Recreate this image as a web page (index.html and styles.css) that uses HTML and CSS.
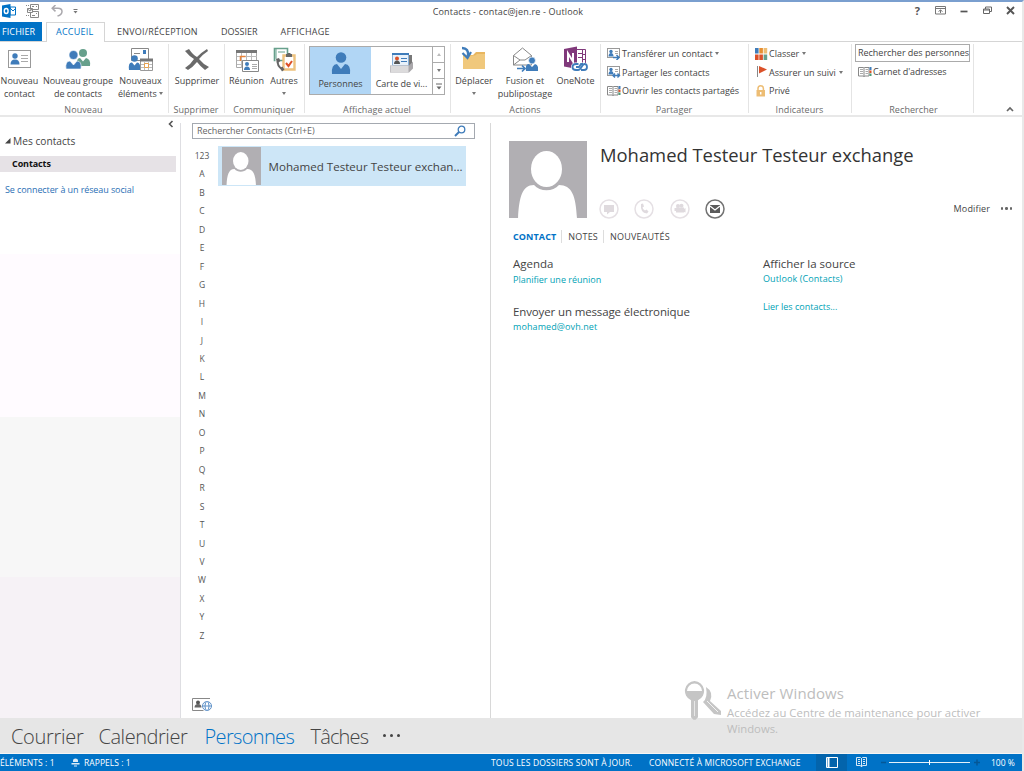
FILE: index.html
```html
<!DOCTYPE html>
<html lang="fr">
<head>
<meta charset="utf-8">
<title>Contacts - contac@jen.re - Outlook</title>
<link rel="stylesheet" href="styles.css">
</head>
<body>
<svg width="0" height="0" class="defs">
  <symbol id="avatar" viewBox="0 0 78 78"><rect width="78" height="78" fill="#b1afb3"/><path d="M9 78C10 57 13 44 25 44C31 51 44 51 50 44C63 44 67 55 68 78Z" fill="#fff"/><ellipse cx="37.500" cy="28" rx="15.500" ry="18" fill="#fff"/></symbol>
  <symbol id="person" viewBox="0 0 20 22"><circle cx="10" cy="5.500" r="5.300" fill="#3f7cba"/><path d="M1 22Q0 12.500 6 12L10 17L14 12Q20 12.500 19 22Z" fill="#3f7cba"/></symbol>
  <symbol id="card" viewBox="0 0 14 12"><rect x=".5" y=".5" width="12" height="9" fill="#fff" stroke="#999"/><circle cx="4" cy="3.500" r="1.700" fill="#3f7cba"/><path d="M1.500 8.500q0-3.500 2.500-3.500t2.500 3.500z" fill="#3f7cba"/><path d="M8 3.500h3M8 5.500h3" stroke="#aaa"/></symbol>
  <symbol id="book" viewBox="0 0 14 12"><path d="M.5 1.500h5l.5.5.5-.5h4.500v8.500h-4.500l-.5.500-.5-.5h-5zM6 2v9" fill="#fff" stroke="#888"/><path d="M2 3.500h3M2 5.500h3M2 7.500h3M7.500 3.500h2.500M7.500 5.500h2.500M7.500 7.500h2.500" stroke="#aaa"/><path d="M11.500 1h2v3h-2z" fill="#3f7cba"/><path d="M11.500 4.500h2v2.500h-2z" fill="#db5129"/><path d="M11.500 7.500h2v2.500h-2z" fill="#4b9d78"/></symbol>
</svg>
<div class="window">
  <header class="titlebar">
    <div class="quick">
      <svg width="14" height="14" viewBox="0 0 14 14"><path d="M8 3h5.500v8H8z" fill="#fff" stroke="#0072c6"/><path d="M8 4l3 3 3-3" fill="none" stroke="#0072c6"/><path d="M0 1.500L8.500 0v14L0 12.500z" fill="#0072c6"/><ellipse cx="4.200" cy="7" rx="1.900" ry="2.500" fill="none" stroke="#fff" stroke-width="1.400"/></svg>
      <svg width="14" height="14" viewBox="0 0 14 14" fill="#fff" stroke="#888"><path d="M4.500.5h8v5h-8zM10 2.500h1M6 2.500h2"/><path d="M4.500 7.500h8v6h-8zM10 9.500h1M6 11.500h3"/><path d="M1.500 4.500h5v4h-5zM1.500 5l2.500 2 2.500-2"/><path d="M0 1.500h4M0 11.500h4" stroke-dasharray="1 1"/></svg>
      <svg width="12" height="12" viewBox="0 0 12 12" fill="none" stroke="#aaa8ad" stroke-width="1.500"><path d="M4.500 0L1.200 3.200l3.300 3.200M1.500 3.200H7q4 0 4 3.300T6.500 11"/></svg>
      <svg class="more" width="5" height="6" viewBox="0 0 5 6"><path d="M.5 1.500h4" stroke="#777"/><path d="M.5 3h4L2.500 5.500z" fill="#777"/></svg>
    </div>
    <div class="title">Contacts - contac@jen.re - Outlook</div>
    <div class="controls">
      <b>?</b>
      <svg width="11" height="9" viewBox="0 0 11 9" fill="none" stroke="#777"><path d="M.5.500h10v7.500H.5zM1 2.500h9M5.500 7V4M3.500 5.500l2-1.500 2 1.500"/></svg>
      <svg width="8" height="9" viewBox="0 0 8 9"><path d="M.5 5.500h7" stroke="#555" stroke-width="1.700"/></svg>
      <svg width="9" height="9" viewBox="0 0 9 9" fill="#fff" stroke="#666"><path d="M2.500 1h6v4.500h-6z"/><path d="M.5 3h6v4.500h-6zM.5 4h6"/></svg>
      <svg width="9" height="9" viewBox="0 0 9 9"><path d="M1 1l7 7M8 1L1 8" stroke="#555" stroke-width="1.900"/></svg>
    </div>
  </header>
  <nav class="tabs">
    <a class="file">FICHIER</a><a class="active">ACCUEIL</a><a class="t3">ENVOI/RÉCEPTION</a><a class="t4">DOSSIER</a><a class="t5">AFFICHAGE</a>
  </nav>
  <section class="ribbon">
    <div class="group">
      <div class="tools">
        <div class="btn w39"><svg width="24" height="28" viewBox="0 0 24 28"><rect x=".5" y="4.500" width="22" height="17" fill="#fff" stroke="#999"/><circle cx="7" cy="10" r="2.700" fill="#3f7cba"/><path d="M2.500 18.500q0-5 4.500-5t4.500 5z" fill="#3f7cba"/><path d="M13 9.500h7M13 12.500h7M13 15.500h7" stroke="#aaa"/></svg><span>Nouveau<br>contact</span></div>
        <div class="btn w78"><svg width="26" height="28" viewBox="0 0 26 28"><circle cx="18" cy="7" r="4" fill="#67a08c"/><path d="M12 20q-1-8 3-8l3 3.500L21 12q5 1 4 8z" fill="#67a08c"/><circle cx="8.500" cy="9" r="4.500" fill="#3f7cba" stroke="#fff" stroke-width=".6"/><path d="M1 23q-1-8 4-8l3.500 4L12 15q5 0 4 8z" fill="#3f7cba" stroke="#fff" stroke-width=".6"/></svg><span>Nouveau groupe<br>de contacts</span></div>
        <div class="btn w47"><svg width="26" height="28" viewBox="0 0 26 28"><path d="M3.500 2.500h17v12h-17z" fill="#fff" stroke="#888"/><path d="M15 4h3v4h-3z" fill="#3f7cba"/><path d="M6 7.500h6" stroke="#888"/><circle cx="6.500" cy="12.500" r="3.300" fill="#3f7cba"/><path d="M1 24q-1-8 3-7.500l2.500 3L9 16.500q4 0 3 7.500z" fill="#3f7cba"/><path d="M12.500 13.500h12v11h-12z" fill="#fff" stroke="#999"/><path d="M12 14h13" stroke="#777" stroke-width="3"/><path d="M13 18.500h11M13 21.500h11M16.500 16v8M20.500 16v8" stroke="#bbb"/><path d="M16.500 17.500h4v4h-4z" fill="#fff" stroke="#e8a04b"/></svg><span>Nouveaux<br>éléments <i class="dd"></i></span></div>
      </div><div class="label">Nouveau</div>
    </div>
    <div class="group">
      <div class="tools"><div class="btn w56"><svg width="26" height="28" viewBox="0 0 26 28"><path d="M1 5l4-2q4 6 8 8q5-5 10-8l1 2q-6 4-9 8q4 5 10 8l-4 3q-5-4-8-8q-4 5-9 8l-3-2q6-4 9-9Q5 10 1 5z" fill="#6a6a6a"/></svg><span>Supprimer</span></div></div><div class="label">Supprimer</div>
    </div>
    <div class="group">
      <div class="tools">
        <div class="btn w43"><svg width="26" height="28" viewBox="0 0 26 28"><path d="M2.500 4.500h20v17h-20z" fill="#fff" stroke="#aaa"/><path d="M2 5.500h21" stroke="#777" stroke-width="3"/><path d="M3 10.500h20M3 14.500h20M3 18.500h20M7.500 7v15M12.500 7v15M17.500 7v15" stroke="#bbb"/><path d="M6.500 15v-4.500h5" stroke="#e8833a" fill="none" stroke-width="1.500"/><path d="M8.500 14.500h16v11h-16z" fill="#fff" stroke="#888"/><circle cx="13" cy="18" r="2" fill="#3f7cba"/><path d="M10 24q0-3.500 3-3.500t3 3.500z" fill="#3f7cba"/><path d="M18 18.500h5M18 20.500h5M18 22.500h5" stroke="#aaa"/></svg><span>Réunion</span></div>
        <div class="btn w32"><svg width="24" height="28" viewBox="0 0 24 28"><path d="M2.500 2.500h13v12h-13z" fill="#fff" stroke="#67a08c" stroke-width="1.600"/><path d="M6 6h7M4 3v11" stroke="#67a08c"/><path d="M11.500 9.500h11v14h-11z" fill="#fff" stroke="#edc27f" stroke-width="2.400"/><path d="M14 11h6V8h-1.500V7h-3v1H14z" fill="#666"/><path d="M14 17l2.500 3L20 15" fill="none" stroke="#db5129" stroke-width="2"/><path d="M5.500 13q-1 7 5.500 11" stroke="#fff" stroke-width="4" fill="none"/><path d="M5.500 13q-1 7 5.500 11" stroke="#666" stroke-width="2" fill="none"/><path d="M4 13l3-1 1.500 3-2.500 2zM8 22l2.500-1.500 2 3-2.500 2z" fill="#666"/></svg><span>Autres<br><i class="dd"></i></span></div>
      </div><div class="label">Communiquer</div>
    </div>
    <div class="group">
      <div class="gallery">
        <div class="item selected"><svg width="20" height="22"><use href="#person"/></svg><span>Personnes</span></div>
        <div class="item"><svg width="26" height="22" viewBox="0 0 26 22"><path d="M6 3h17v12H6z" fill="#777"/><path d="M3.500 2.500h16v11h-16z" fill="#e9f2fb" stroke="#8ab0d8"/><path d="M3 2h17" stroke="#3f7cba" stroke-width="2"/><circle cx="8" cy="6.500" r="2" fill="#db5129"/><path d="M5 12q0-3.500 3-3.500t3 3.500z" fill="#555"/><path d="M12 6.500h6M12 9.500h6" stroke="#3f7cba"/><path d="M1 13.500h19l4-4v7l-4 4H1z" fill="#aaa8ab"/><path d="M1.500 13.500h18v7h-18z" fill="#dcdbdc"/></svg><span>Carte de vi...</span></div>
        <div class="scroll"><i class="up"></i><i class="dd"></i><svg width="6" height="7" viewBox="0 0 6 7"><path d="M0 1h6" stroke="#666"/><path d="M.5 3.500h5L3 6.500z" fill="#666"/></svg></div>
      </div><div class="label">Affichage actuel</div>
    </div>
    <div class="group">
      <div class="tools">
        <div class="btn w46"><svg width="26" height="28" viewBox="0 0 26 28"><path d="M2 9h10l3-3h9v17H2z" fill="#e8b65f"/><path d="M2 9.500h12l2-1.500h8v15H2z" fill="#f0c87c"/><path d="M1 2q7 0 6 8" fill="none" stroke="#3f7cba" stroke-width="2.500"/><path d="M1.500 7l5 5 3.500-6" fill="none" stroke="#3f7cba" stroke-width="2.200"/></svg><span>Déplacer<br><i class="dd"></i></span></div>
        <div class="btn w56"><svg width="26" height="28" viewBox="0 0 26 28"><path d="M1.500 9.500L10.500 2l9 7.500V19h-18zM1.500 9.500L8 14h5l6.500-4.500M1.500 19L8 14" fill="#fff" stroke="#888"/><circle cx="20" cy="14.500" r="3.400" fill="#3f7cba" stroke="#fff" stroke-width=".6"/><path d="M14 25q-1-7 3-7l3 3 3-3q4 1 3 7z" fill="#3f7cba"/><path d="M5 22.500h8M10 19.500l3 3-3 3" fill="none" stroke="#3f7cba" stroke-width="1.700"/></svg><span>Fusion et<br>publipostage</span></div>
        <div class="btn w45"><svg width="24" height="28" viewBox="0 0 24 28"><path d="M12.500 3.500h9v16h-9z" fill="#fff" stroke="#80397b"/><path d="M18.500 4v15M18 8.500h3M18 13.500h3M14 7.500h4M14 11.500h4" stroke="#80397b"/><path d="M0 3l13-2.500v22.500L0 20.500z" fill="#80397b"/><path d="M4 16V7.500l5 8V7" fill="none" stroke="#fff" stroke-width="2"/><rect x="7" y="16.500" width="17" height="9" rx="4.500" fill="#fff"/><path d="M14.500 18H12q-3.500 0-3.500 3t3.500 3h2q2 0 3.500-3t3-3q2.500 0 2.500 3t-3 3h-3M12 21h3l2-3h2" fill="none" stroke="#3f7cba" stroke-width="1.800"/></svg><span>OneNote</span></div>
      </div><div class="label">Actions</div>
    </div>
    <div class="group">
      <div class="rows">
        <div class="row"><svg width="14" height="12"><use href="#card"/><path d="M6 9.500h6M9.500 7l2.500 2.500L9.500 12" fill="none" stroke="#3f7cba" stroke-width="1.500"/></svg><span class="r1">Transférer un contact</span><i class="dd"></i></div>
        <div class="row"><svg width="14" height="12"><use href="#card"/><path d="M5.500 9.500h7M8 7.500L6 9.500l2 2M10.500 7.500l2 2-2 2" fill="none" stroke="#3f7cba" stroke-width="1.400"/></svg><span class="r2">Partager les contacts</span></div>
        <div class="row"><svg width="14" height="12"><use href="#book"/></svg><span class="r3">Ouvrir les contacts partagés</span></div>
      </div><div class="label">Partager</div>
    </div>
    <div class="group">
      <div class="rows">
        <div class="row"><svg width="13" height="12" viewBox="0 0 13 12"><path d="M0 0h3.600v5.500H0z" fill="#3f7cba"/><path d="M4.300 0h3.600v5.500H4.300z" fill="#e78f31"/><path d="M8.600 0h3.600v5.500H8.600z" fill="#edbd74"/><path d="M0 6.500h3.600V12H0zM4.300 6.500h3.600V12H4.300z" fill="#db5129"/><path d="M8.600 6.500h3.600V12H8.600z" fill="#67a08c"/></svg><span>Classer</span><i class="dd"></i></div>
        <div class="row"><svg width="13" height="12" viewBox="0 0 13 12"><path d="M2.500 0v11" stroke="#888"/><path d="M4 0l8 3.500L4 7.500z" fill="#db5129"/></svg><span class="r5">Assurer un suivi</span><i class="dd"></i></div>
        <div class="row"><svg width="13" height="12" viewBox="0 0 13 12"><path d="M3 6V3.500q0-2.700 2.700-2.700t2.700 2.700V6" fill="none" stroke="#edbd74" stroke-width="1.500"/><path d="M1.500 5h8.500v6.500H1.500z" fill="#edbd74"/><path d="M5.700 7v2.500" stroke="#fff" stroke-width="1.500"/></svg><span>Privé</span></div>
      </div><div class="label">Indicateurs</div>
    </div>
    <div class="group search-group">
      <div class="find">Rechercher des personnes</div>
      <div class="row"><svg width="14" height="12"><use href="#book"/></svg><span class="r4">Carnet d'adresses</span></div>
      <div class="label">Rechercher</div>
    </div>
    <div class="collapse"><svg width="8" height="6" viewBox="0 0 8 6"><path d="M1 5l3-3 3 3" fill="none" stroke="#666" stroke-width="1.700"/></svg></div>
  </section>
  <main>
    <aside>
      <svg class="fold" width="6" height="8" viewBox="0 0 6 8"><path d="M4.500 1L1.500 4l3 3" fill="none" stroke="#555" stroke-width="1.600"/></svg>
      <div class="tree"><svg width="6" height="6" viewBox="0 0 6 6"><path d="M5.500 0v5.500H0z" fill="#444"/></svg><span>Mes contacts</span></div>
      <div class="folder">Contacts</div>
      <a class="social">Se connecter à un réseau social</a>
    </aside>
    <section class="list">
      <div class="searchbox"><span>Rechercher Contacts (Ctrl+E)</span><svg width="12" height="12" viewBox="0 0 12 12" fill="none" stroke="#3f7cba"><circle cx="7.500" cy="4.500" r="3.300" stroke-width="1.300"/><path d="M5 7L1 11" stroke-width="2"/></svg></div>
      <div class="columns">
        <div class="index"><span>123</span><span>A</span><span>B</span><span>C</span><span>D</span><span>E</span><span>F</span><span>G</span><span>H</span><span>I</span><span>J</span><span>K</span><span>L</span><span>M</span><span>N</span><span>O</span><span>P</span><span>Q</span><span>R</span><span>S</span><span>T</span><span>U</span><span>V</span><span>W</span><span>X</span><span>Y</span><span>Z</span></div>
        <div class="entry"><svg width="39" height="38" viewBox="0 0 78 76" preserveAspectRatio="none"><use href="#avatar" width="78" height="78"/></svg><span>Mohamed Testeur Testeur exchan...</span></div>
      </div>
      <svg class="addr" width="21" height="14" viewBox="0 0 21 14"><path d="M18 .5H.5v12h11" fill="none" stroke="#888"/><circle cx="6" cy="4.500" r="2" fill="#555"/><path d="M2.500 9.500q0-3.500 3.500-3.500t3.500 3.500z" fill="#666"/><g fill="#fff" stroke="#5c90c8"><circle cx="15" cy="8" r="4.500"/><ellipse cx="15" cy="8" rx="2" ry="4.500"/><path d="M10.500 8h9"/></g></svg>
    </section>
    <section class="detail">
      <div class="head">
        <svg width="78" height="77" viewBox="0 0 78 77"><use href="#avatar" width="78" height="78"/></svg>
        <div class="who">
          <h1>Mohamed Testeur Testeur exchange</h1>
          <div class="actions">
            <svg width="20" height="20" viewBox="0 0 20 20"><circle cx="10" cy="10" r="9" fill="none" stroke="#e5e0e4" stroke-width="1.500"/><path d="M5 6h10v7h-4l-3 2.500V13H5z" fill="#dfdade"/></svg>
            <svg width="20" height="20" viewBox="0 0 20 20"><circle cx="10" cy="10" r="9" fill="none" stroke="#e5e0e4" stroke-width="1.500"/><path d="M7 5l2-.5 1 3-1.500 1q.5 2 2.500 3l1.500-1 2 2-1.500 2Q6 14 7 5z" fill="#dfdade"/></svg>
            <svg width="20" height="20" viewBox="0 0 20 20"><circle cx="10" cy="10" r="9" fill="none" stroke="#e5e0e4" stroke-width="1.500"/><path d="M6 8.500h8v5H6zM13 10.500l2.500-1.500v4.500L13 12.500zM4.500 9H7v3H4.500z" fill="#dfdade"/><circle cx="8" cy="7" r="2" fill="#dfdade"/><circle cx="11.500" cy="6.700" r="2" fill="#dfdade"/></svg>
            <svg width="20" height="20" viewBox="0 0 20 20"><circle cx="10" cy="10" r="9" fill="none" stroke="#737373" stroke-width="1.500"/><path d="M5 6h10v8H5z" fill="#5a5a5a"/><path d="M5 7l5 4 5-4" fill="none" stroke="#fff" stroke-width="1.200"/></svg>
            <span class="edit">Modifier</span><span class="dots"><i></i><i></i><i></i></span>
          </div>
        </div>
      </div>
      <div class="ptabs"><b>CONTACT</b><span class="p2">NOTES</span><span class="p3">NOUVEAUTÉS</span></div>
      <div class="info">
        <div><h2>Agenda</h2><a class="l1">Planifier une réunion</a><h2 class="second">Envoyer un message électronique</h2><a class="l2">mohamed@ovh.net</a></div>
        <div><h2 class="src">Afficher la source</h2><a class="l3">Outlook (Contacts)</a><a class="l4">Lier les contacts...</a></div>
      </div>
    </section>
  </main>
  <nav class="modules"><a class="m1">Courrier</a><a class="m2">Calendrier</a><a class="m3">Personnes</a><a class="m4">Tâches</a><span class="dots big"><i></i><i></i><i></i></span></nav>
  <footer>
    <span class="s1">ÉLÉMENTS : 1</span>
    <svg class="bell" width="9" height="9" viewBox="0 0 9 9" fill="#dcebf7"><path d="M2 4V2.500q0-2 2.500-2T7 2.500V4zM.5 5h8v1.500h-8zM3 7.500h3v1H3z"/></svg>
    <span class="s2">RAPPELS : 1</span>
    <span class="s3">TOUS LES DOSSIERS SONT À JOUR.</span>
    <span class="s4">CONNECTÉ À MICROSOFT EXCHANGE</span>
    <span class="view"><svg width="12" height="11" viewBox="0 0 12 11"><path d="M.5.500h11v10H.5z" fill="none" stroke="#fff"/><path d="M2.500 1v9" stroke="#fff" stroke-width="2"/></svg></span>
    <svg class="read" width="11" height="11" viewBox="0 0 11 11" fill="none" stroke="#d7e7f5"><path d="M.5.500h4l1 1 1-1h4v8h-4l-1 1.500-1-1.500h-4zM5.500 1v9M2 2.500h2M2 4.500h2M2 6.500h2M7 2.500h2M7 4.500h2M7 6.500h2"/></svg>
    <svg class="slider" width="100" height="9" viewBox="0 0 100 9"><path d="M0 4.500h5M93 4.500h6M96 1.500v6" stroke="#045796" stroke-width="1.500"/><path d="M8 4.500h81" stroke="#e5f0f9"/><path d="M48.500 2v5" stroke="#fff"/></svg>
    <span class="s5">100 %</span>
  </footer>
  <div class="watermark">
    <svg width="38" height="40" viewBox="0 0 38 40"><path d="M22 6q8 5 4 14l11 10v4l-7-1-11-12q5-4 3-15z" fill="#c5c5c5"/><path d="M23 20l11 11" stroke="#f3f3f3"/><path fill-rule="evenodd" d="M10.500 0a10 10 0 0 1 3.500 19.200v17l-2.500 2.500h-2L7 36.200V19.200A10 10 0 0 1 10.500 0zM3 10h15a7.500 7.500 0 0 0-15 0z" fill="#c5c5c5"/><path d="M10.500 20v15" stroke="#e7e7e7"/></svg>
    <div><div class="wt">Activer Windows</div><div class="w2">Accédez au Centre de maintenance pour activer</div><div class="w3">Windows.</div></div>
  </div>
</div>
</body>
</html>
```

FILE: styles.css
```css
* { box-sizing: border-box; }
body { margin: 0; background: #fff; font: 9px/13px "Open Sans", "Noto Sans", sans-serif; color: #444; overflow: hidden; }
svg { display: block; flex: none; }
.defs { position: absolute; }
h1, h2 { margin: 0; font-weight: 400; }
.window { position: relative; width: 1024px; height: 771px; display: flex; flex-direction: column; border-top: 2px solid #7a9fcf; border-right: 2px solid #e9e9e9; white-space: nowrap; }
.titlebar { height: 20px; display: grid; grid-template-columns: 300px 416px 1fr; align-items: center; }
.quick { display: flex; align-items: center; padding: 0 0 2px 2px; gap: 10px; }
.quick svg:nth-child(3) { margin-left: 1px; }
.title { text-align: center; letter-spacing: .16px; margin-top: -2px; }
.controls { display: flex; justify-content: flex-end; align-items: center; gap: 14.500px; padding: 0 7px 3px 0; }
.controls b { font-size: 11px; color: #555; }
.tabs { height: 20px; display: flex; border-bottom: 1px solid #d5d5d5; line-height: 20px; flex: none; }
.tabs .file { width: 42px; margin-right: 4px; background: #0072c6; color: #fff; padding-left: 2px; letter-spacing: .1px; }
.tabs .active { width: 59px; margin-right: 12px; padding-left: 9px; height: 20px; background: #fff; border: 1px solid #d5d5d5; border-bottom: 0; color: #0072c6; line-height: 18px; letter-spacing: .25px; }
.tabs .t3 { width: 104px; letter-spacing: .2px; }
.tabs .t4 { width: 59.500px; }
.tabs .t5 { letter-spacing: .25px; }
.ribbon { height: 75px; flex: none; display: grid; grid-template-columns: 169px 56px 80px 146px 150px 148px 103px 122px 1fr; border-bottom: 2px solid #e8e8e8; }
.group { position: relative; display: flex; flex-direction: column; padding-top: 4px; }
.group::after { content: ""; position: absolute; right: 0; top: 2px; bottom: 2px; border-right: 1px solid #e4e4e4; }
.tools { display: flex; height: 57px; }
.btn { display: flex; flex-direction: column; align-items: center; text-align: center; }
.btn span { line-height: 13px; }
.w39 { width: 39px; } .w78 { width: 78px; } .w47 { width: 47px; } .w56 { width: 56px; } .w43 { width: 43px; } .w32 { width: 32px; } .w46 { width: 46px; } .w45 { width: 45px; }
.label { height: 11px; line-height: 11px; text-align: center; color: #6a6a6a; margin-top: auto; padding-right: 2px; letter-spacing: .08px; }
.dd { display: inline-block; border: 2.500px solid transparent; border-top: 3px solid #777; border-bottom: 0; vertical-align: 2px; }
.gallery { margin-left: 4px; width: 136px; height: 49px; border: 1px solid #ababab; display: flex; }
.item { width: 61px; display: flex; flex-direction: column; align-items: center; padding-top: 5px; gap: 3px; }
.item.selected { background: #b1d6f5; }
.scroll { flex: 1; border-left: 1px solid #ababab; display: grid; grid-template-rows: 1fr 1fr 1fr; }
.scroll > * { place-self: center; }
.scroll { background: linear-gradient(transparent 15px, #ababab 15px 16px, transparent 16px 31px, #ababab 31px 32px, transparent 32px); }
.up { border: 2px solid transparent; border-bottom: 3px solid #bbb; border-top: 0; }
.rows { display: flex; flex-direction: column; gap: 5.500px; padding: 1px 0 0 6px; }
.row { display: flex; align-items: center; gap: 1px; height: 13px; }
.row .dd { margin-left: 2px; }
.rows .row .r1 + .dd { margin-left: 1px; }
.search-group { padding: 2px 0 0 3px; }
.find { border: 1px solid #ababab; width: 115px; height: 18px; line-height: 16px; padding-left: 2px; overflow: hidden; letter-spacing: -.02px; }
.search-group .row { margin: 3px 0 0 3px; gap: 1px; }
.r4 { letter-spacing: -.1px; }
.collapse { display: flex; justify-content: flex-end; align-items: flex-end; padding: 0 8px 3px 0; }
main { flex: 1; display: grid; grid-template-columns: 180px 311px 1fr; min-height: 0; }
aside { display: flex; flex-direction: column; padding-top: 3px; background: linear-gradient(#fff 137px, #fffbff 137px 300px, #f7f7f7 300px 460px, #f6f2f6 460px); }
.fold { margin-left: 168px; }
.tree { display: flex; align-items: center; gap: 2px; padding-left: 5px; height: 14px; margin-top: 6px; font-size: 10.200px; }
.folder { margin-top: 8px; width: 176px; height: 16px; line-height: 15px; background: #e6e2e6; color: #111; font-weight: 700; padding-left: 12px; letter-spacing: -.1px; }
.social { margin: 11px 0 0 5px; color: #2a6fb5; letter-spacing: -.1px; }
.list { margin-top: 6px; border-left: 1px solid #dedee2; border-right: 1px solid #d8d8d8; padding-left: 11px; display: flex; flex-direction: column; }
.searchbox { width: 283px; height: 16px; border: 1px solid #a4a9b0; display: flex; justify-content: space-between; align-items: center; padding: 0 8px 0 4px; color: #666; line-height: 14px; letter-spacing: -.06px; }
.columns { display: flex; padding-top: 7px; }
.index { width: 20px; display: flex; flex-direction: column; text-align: center; font-size: 8.500px; padding-top: 1px; color: #555; }
.index span { height: 18.460px; line-height: 18.460px; }
.entry { margin-left: 6px; width: 248px; height: 40px; background: #cde6f7; display: flex; align-items: center; padding-left: 4px; gap: 7.500px; font-size: 11.600px; }
.addr { margin: auto 0 6px 0; }
.detail { padding: 24px 10px 0 18px; }
.head { display: flex; gap: 13px; }
.who { flex: 1; padding-top: 1px; }
h1 { font-size: 18.400px; line-height: 26px; color: #333; }
.actions { display: flex; align-items: center; margin: 30.500px 0 0 -1px; gap: 15.400px; }
.edit { margin-left: auto; letter-spacing: .15px; }
.dots { display: flex; gap: 2px; margin-left: -5px; }
.dots i { width: 2.500px; height: 2.500px; border-radius: 50%; background: #666; }
.ptabs { display: flex; margin: 11.500px 0 0 4px; line-height: 13px; }
.ptabs b { color: #0072c6; letter-spacing: .1px; }
.ptabs span { border-left: 1px solid #ddd; margin-left: 5px; padding-left: 6px; letter-spacing: .2px; }
.info { display: grid; grid-template-columns: 250px 1fr; padding: 12px 0 0 4px; }
h2 { font-size: 11.500px; line-height: 17px; letter-spacing: -.03px; }
.info a { display: block; color: #00a2b5; }
.info .l1 { margin-top: 1px; }
.info .l2 { letter-spacing: .1px; }
.info .l3 { letter-spacing: .1px; }
.info .l4 { margin-top: 15px; }
.info .second { margin-top: 17px; letter-spacing: -.13px; }
.modules { height: 36px; flex: none; background: #e6e6e6; border-bottom: 1px solid #f5f5f5; display: flex; align-items: center; font-size: 20px; font-weight: 300; padding: 3px 0 0 11px; }
.modules a { line-height: 30px; }
.m1 { width: 87.500px; letter-spacing: -.3px; }
.m2 { width: 106px; letter-spacing: -.45px; }
.m3 { width: 106px; color: #0072c6; letter-spacing: -.65px; }
.m4 { width: 72.500px; letter-spacing: -.85px; }
.big { margin: -3px 0 0; gap: 3.500px; }
.big i { width: 3.300px; height: 3.300px; background: #444; }
footer { height: 17px; flex: none; background: #0072c6; color: #fff; display: flex; align-items: center; font-size: 8.500px; line-height: 17px; }
.s1 { width: 71px; letter-spacing: .1px; }
.s2 { margin-left: 4px; width: 407px; letter-spacing: .05px; }
.s3 { width: 158px; letter-spacing: .17px; }
.s4 { width: 167px; letter-spacing: .13px; }
.view { width: 31px; height: 17px; background: #0364ac; display: flex; align-items: center; justify-content: center; }
.read { margin: 0 14px 0 9px; }
.slider { margin-right: 10px; }
.watermark { position: absolute; left: 684px; top: 679px; display: flex; gap: 5px; color: #bdbdbd; font-size: 11.300px; line-height: 16px; }
.wt { font-size: 15px; line-height: 25px; letter-spacing: .1px; }
.w2 { margin-top: -1px; letter-spacing: .04px; }
```
